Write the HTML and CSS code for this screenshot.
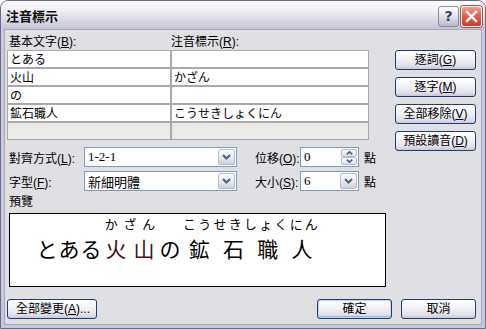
FILE: index.html
```html
<!DOCTYPE html>
<html lang="zh-Hant">
<head>
<meta charset="UTF-8">
<title>注音標示</title>
<link rel="stylesheet" href="styles.css">
</head>
<body>
<div class="window">
    <div class="titlebar">
        <span class="title">注音標示</span>
        <div class="caption-btns">
            <span class="cap-btn help">?</span>
            <span class="cap-btn close">
                <svg width="19" height="19" viewBox="0 0 19 19"><path d="M5 5l9 9M14 5l-9 9" stroke="#fff" stroke-width="2.4" stroke-linecap="square"/></svg>
            </span>
        </div>
    </div>

    <div class="client">
        <div class="top">
            <div class="words">
                <div class="heads">
                    <span class="head-base">基本文字(<u>B</u>):</span>
                    <span>注音標示(<u>R</u>):</span>
                </div>
                <div class="table">
                    <div class="cell">とある</div><div class="cell"></div>
                    <div class="cell">火山</div><div class="cell">かざん</div>
                    <div class="cell">の</div><div class="cell"></div>
                    <div class="cell">鉱石職人</div><div class="cell">こうせきしょくにん</div>
                    <div class="cell off"></div><div class="cell off"></div>
                </div>
            </div>
            <div class="side-btns">
                <button type="button" class="btn wide">逐詞(<u>G</u>)</button>
                <button type="button" class="btn wide">逐字(<u>M</u>)</button>
                <button type="button" class="btn wide">全部移除(<u>V</u>)</button>
                <button type="button" class="btn wide">預設讀音(<u>D</u>)</button>
            </div>
        </div>

        <div class="options">
            <span class="opt-label">對齊方式(<u>L</u>):</span>
            <div class="combo">
                <span class="combo-text">1-2-1</span>
                <span class="drop"><svg width="9" height="6" viewBox="0 0 9 6"><path d="M1 1l3.5 3.5L8 1" stroke="#4d6185" stroke-width="2" fill="none"/></svg></span>
            </div>
            <span class="opt-label second">位移(<u>O</u>):</span>
            <div class="combo">
                <span class="combo-text">0</span>
                <span class="spin">
                    <span class="spin-half"><svg width="7" height="4" viewBox="0 0 7 4"><path d="M0.8 3.4L3.5 0.8 6.2 3.4" stroke="#4d6185" stroke-width="1.6" fill="none"/></svg></span>
                    <span class="spin-half"><svg width="7" height="4" viewBox="0 0 7 4"><path d="M0.8 0.6L3.5 3.2 6.2 0.6" stroke="#4d6185" stroke-width="1.6" fill="none"/></svg></span>
                </span>
            </div>
            <span class="unit">點</span>

            <span class="opt-label">字型(<u>F</u>):</span>
            <div class="combo">
                <span class="combo-text">新細明體</span>
                <span class="drop"><svg width="9" height="6" viewBox="0 0 9 6"><path d="M1 1l3.5 3.5L8 1" stroke="#4d6185" stroke-width="2" fill="none"/></svg></span>
            </div>
            <span class="opt-label second">大小(<u>S</u>):</span>
            <div class="combo">
                <span class="combo-text">6</span>
                <span class="drop"><svg width="9" height="6" viewBox="0 0 9 6"><path d="M1 1l3.5 3.5L8 1" stroke="#4d6185" stroke-width="2" fill="none"/></svg></span>
            </div>
            <span class="unit">點</span>
        </div>

        <div class="preview-label">預覽</div>
        <div class="preview">
            <div class="group g1">
                <span class="ruby"></span>
                <span class="base"><span>と</span><span>あ</span><span>る</span></span>
            </div>
            <div class="group g2">
                <span class="ruby"><span>か</span><span>ざ</span><span>ん</span></span>
                <span class="base"><span class="red">火</span><span class="red">山</span></span>
            </div>
            <div class="group g3">
                <span class="ruby"></span>
                <span class="base"><span>の</span></span>
            </div>
            <div class="group g4">
                <span class="ruby"><span>こ</span><span>う</span><span>せ</span><span>き</span><span>し</span><span>ょ</span><span>く</span><span>に</span><span>ん</span></span>
                <span class="base"><span>鉱</span><span>石</span><span>職</span><span>人</span></span>
            </div>
        </div>

        <div class="footer">
            <button type="button" class="btn change">全部變更(<u>A</u>)...</button>
            <span class="spacer"></span>
            <button type="button" class="btn default">確定</button>
            <button type="button" class="btn">取消</button>
        </div>
    </div>
</div>
</body>
</html>
```

FILE: styles.css
```css
body {
    margin: 0;
    background: #fff;
    font-family: "Liberation Sans", "Noto Sans CJK TC", sans-serif;
    font-size: 12px;
    color: #000;
}

.window {
    width: 486px;
    height: 329px;
    box-sizing: border-box;
    border: 1px solid #6c6c84;
    border-radius: 8px 8px 0 0;
    background: #c9c8d8;
    padding: 0 3px 3px;
    display: flex;
    flex-direction: column;
}

.titlebar {
    height: 28px;
    margin: 0 -3px;
    padding: 0 3px 0 5px;
    border-radius: 7px 7px 0 0;
    background: linear-gradient(#fdfdfe, #f1f1f5 30%, #dcdce6 65%, #c4c3d5);
    display: flex;
    align-items: center;
}

.title {
    flex: 1;
    font-family: "Noto Sans CJK TC", sans-serif;
    font-weight: bold;
    font-size: 13px;
    color: #111;
    padding-top: 1px;
}

.caption-btns {
    display: flex;
    gap: 2px;
    padding-top: 2px;
}

.cap-btn {
    width: 21px;
    height: 21px;
    box-sizing: border-box;
    border-radius: 3px;
    display: flex;
    align-items: center;
    justify-content: center;
}

.help {
    border: 1px solid #8a8aa4;
    background: linear-gradient(#ffffff, #e6e6ee 45%, #b9b8cc);
    color: #3d3d5e;
    font-family: "DejaVu Sans", sans-serif;
    font-weight: bold;
    font-size: 14px;
}

.close {
    border: 1px solid #fff;
    box-shadow: 0 0 0 1px #b74c3f;
    background: linear-gradient(#f0a08e, #dd6450 45%, #c3402c);
}

.client {
    flex: 1;
    background: #e0dfe3;
    border: 1px solid #a8a7bb;
    padding: 0 5px 0 2px;
    display: flex;
    flex-direction: column;
}

/* list of words */
.top {
    height: 110px;
    display: flex;
    align-items: flex-start;
}

.heads {
    height: 20px;
    display: flex;
    align-items: center;
    padding-left: 2px;
}

.head-base {
    width: 162px;
}

.table {
    display: grid;
    grid-template-columns: 164px 198px;
    grid-auto-rows: 18px;
}

.cell {
    border: 1px solid #a9a9ad;
    background: #fff;
    padding-left: 2px;
    line-height: 16px;
    font-family: "Noto Sans CJK JP", sans-serif;
    white-space: nowrap;
    overflow: hidden;
}

.cell.off {
    background: #ebeae6;
}

.side-btns {
    margin: 20px 0 0 26px;
    display: flex;
    flex-direction: column;
    gap: 7px;
}

.btn {
    height: 20px;
    width: 75px;
    padding: 0;
    border: 1px solid #1f3f6f;
    border-radius: 3px;
    background: linear-gradient(#ffffff, #f4f4f8 40%, #e2e1ea 80%, #c8c7d8);
    font-family: "Liberation Sans", "Noto Sans CJK TC", sans-serif;
    font-size: 12px;
    color: #000;
    line-height: 16px;
}

.btn.wide {
    width: 81px;
}

.btn.change {
    width: 90px;
    text-align: left;
    padding-left: 8px;
}

.btn.default {
    box-shadow: inset 0 0 0 1px #c3d4f2, inset 0 -1px 0 1px #9db7e8;
}

/* alignment / font rows */
.options {
    margin-top: 7px;
    display: grid;
    grid-template-columns: 77px 153px 63px 59px auto;
    grid-auto-rows: 20px;
    row-gap: 4px;
    align-items: center;
}

.opt-label {
    padding-left: 2px;
    white-space: nowrap;
}

.opt-label.second {
    padding-left: 18px;
}

.combo {
    height: 20px;
    box-sizing: border-box;
    border: 1px solid #7f9db9;
    background: #fff;
    display: flex;
    align-items: center;
}

.combo-text {
    flex: 1;
    padding-left: 3px;
    font-family: "Liberation Serif", "Noto Sans CJK TC", serif;
    font-size: 13px;
}

.drop {
    width: 17px;
    height: 16px;
    margin-right: 1px;
    box-sizing: border-box;
    border: 1px solid #b7bccb;
    border-radius: 2px;
    background: linear-gradient(#fdfdfe, #e7e8ef 55%, #cfd2de);
    display: flex;
    align-items: center;
    justify-content: center;
}

.spin {
    width: 16px;
    margin-right: 1px;
    display: flex;
    flex-direction: column;
}

.spin-half {
    height: 8px;
    box-sizing: border-box;
    border: 1px solid #b7bccb;
    border-radius: 2px;
    background: linear-gradient(#fdfdfe, #dfe1ea);
    display: flex;
    align-items: center;
    justify-content: center;
}

.unit {
    padding-left: 5px;
}

/* preview */
.preview-label {
    height: 22px;
    line-height: 22px;
    padding-left: 2px;
}

.preview {
    width: 377px;
    height: 74px;
    box-sizing: border-box;
    margin-left: 2px;
    border: 1px solid #000;
    background: #fff;
    padding: 0 0 0 26px;
    display: flex;
    font-family: "Noto Sans CJK JP", sans-serif;
}

.group {
    display: flex;
    flex-direction: column;
}

.group .ruby,
.group .base {
    display: flex;
    justify-content: space-around;
}

.ruby {
    height: 19px;
    font-size: 13px;
    line-height: 19px;
}

.base {
    font-size: 21px;
    line-height: 31px;
}

.red {
    color: #4a1010;
}

.g1 { width: 66px; }
.g2 { width: 56px; }
.g3 { width: 24px; }
.g4 { width: 137px; }

.footer {
    margin-top: 12px;
    display: flex;
    gap: 9px;
}

.spacer {
    flex: 1;
}
```
